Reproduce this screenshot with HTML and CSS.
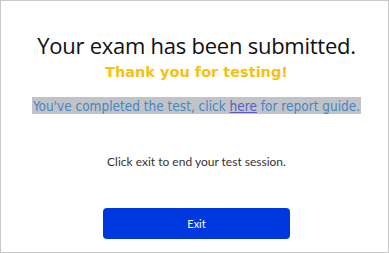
FILE: index.html
```html
<!DOCTYPE html>
<html>
<head>
<meta charset="utf-8">
<link rel="stylesheet" href="styles.css">
</head>
<body>
<div class="frame">
  <h1 class="title">Your exam has been submitted.</h1>
  <p class="thanks">Thank you for testing!</p>
  <p class="guide"><span class="hl">You've completed the test, click <a class="link" href="#">here</a> for report guide.</span></p>
  <p class="note">Click exit to end your test session.</p>
  <button class="exit">Exit</button>
</div>
</body>
</html>
```
FILE: styles.css
```css
html, body {
  margin: 0;
  padding: 0;
  background: #fff;
}
.frame {
  box-sizing: border-box;
  width: 389px;
  height: 253px;
  border: 1px solid #c9c9c9;
  display: flex;
  flex-direction: column;
  align-items: center;
  padding: 30px 0 0 4px;
}
.title {
  margin: 0;
  font-family: "Open Sans", sans-serif;
  font-weight: 500;
  font-size: 22px;
  line-height: 28px;
  color: #111;
  letter-spacing: -0.25px;
}
.thanks {
  margin: 4px 0 0;
  font-family: "DejaVu Sans", sans-serif;
  font-weight: 700;
  font-size: 14.5px;
  line-height: 18px;
  color: #f5c211;
}
.guide {
  margin: 17px 0 0;
  font-family: "DejaVu Sans Condensed", "DejaVu Sans", sans-serif;
  font-size: 13.5px;
  line-height: 16px;
}
.hl {
  background: #c0c4c9;
  color: #4a86c0;
  padding: 1px 1px 0;
}
.link {
  color: #5a5cc0;
  text-decoration: underline;
}
.note {
  margin: 40px 0 0;
  font-family: "Lato", sans-serif;
  font-size: 12px;
  line-height: 16px;
  color: #333;
}
.exit {
  margin-top: 38px;
  width: 187px;
  height: 31px;
  border: none;
  border-radius: 4px;
  background: #0038e0;
  color: #fff;
  font-family: "Lato", sans-serif;
  font-size: 11px;
}
```
